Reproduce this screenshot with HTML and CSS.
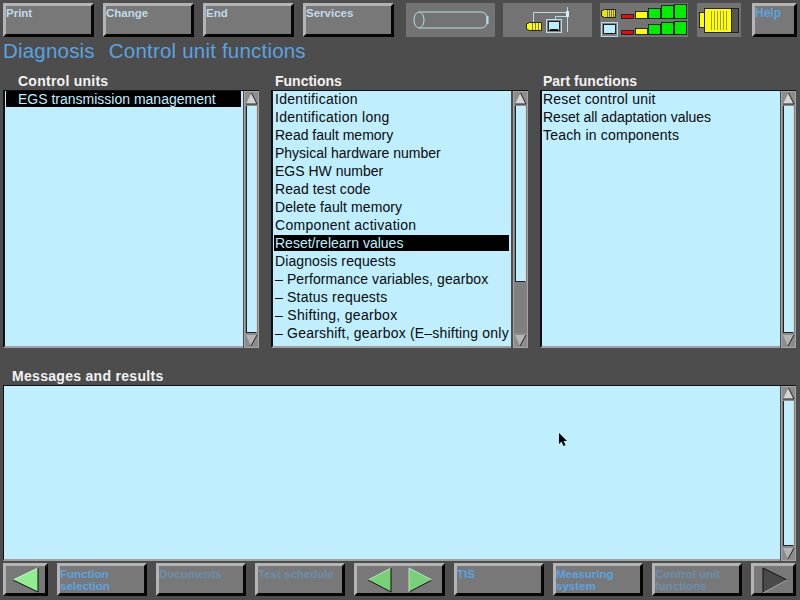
FILE: index.html
```html
<!DOCTYPE html>
<html lang="en">

<head>
    <meta charset="UTF-8">
    <title>Diagnosis - Control unit functions</title>
    <link rel="stylesheet" href="styles.css">
</head>

<body>
    <div class="screen">
        <div class="top-bar">
            <div class="btn top-btn">Print</div>
            <div class="btn top-btn">Change</div>
            <div class="btn top-btn">End</div>
            <div class="btn top-btn">Services</div>

            <div class="panel panel-cable">
                <svg width="89" height="34" viewBox="0 0 89 34">
                    <path d="M13 9H76Q80 10 81 13V21Q80 24 76 25H13" fill="none" stroke="#b5dcea"/>
                    <ellipse cx="13" cy="17" rx="5" ry="8" fill="#737373" stroke="#b5dcea"/>
                    <path d="M81.500 13V21" stroke="#b5dcea" stroke-width="2"/>
                </svg>
            </div>
            <div class="panel panel-net">
                <svg width="89" height="34" viewBox="0 0 89 34">
                    <path d="M30.500 20V9.500H65M52.500 16V13.500H65M64.500 4V29" fill="none" stroke="#b5dcea"/>
                    <rect x="63" y="8" width="3" height="6" fill="#d6eef6"/>
                    <path d="M26.500 19.500H38.500V27.500H26.500L23.500 26V21Z" fill="#ffff00" stroke="#222"/>
                    <path d="M29.500 20V27M32.500 20V27M35.500 20V27" stroke="#777"/>
                    <rect x="43.500" y="16.500" width="15" height="13" fill="#7f7f7f" stroke="#b5dcea"/>
                    <rect x="45.500" y="18.500" width="11" height="9" fill="#bdeeff" stroke="#222"/>
                    <rect x="47" y="26" width="8" height="2" fill="#111"/>
                </svg>
            </div>
            <div class="panel panel-bars">
                <svg width="88" height="34" viewBox="0 0 88 34">
                    <path d="M4.500 6.500H15.500V14.500H4.500L1.500 13V8Z" fill="#e6e600" stroke="#222"/>
                    <path d="M7.500 7V14M9.500 7V14M11.500 7V14M13.500 7V14" stroke="#777"/>
                    <rect x="1.500" y="19.500" width="16" height="14" fill="#7f7f7f" stroke="#b5dcea"/>
                    <rect x="3.500" y="21.500" width="12" height="9" fill="#bdeeff" stroke="#222"/>
                    <rect x="6" y="30" width="7" height="1" fill="#111"/>
                    <g stroke="#222">
                        <rect x="21.500" y="11.500" width="12" height="4" fill="#e01010"/>
                        <rect x="35.500" y="8.500" width="12" height="7" fill="#ffff00"/>
                        <rect x="48.500" y="5.500" width="12" height="10" fill="#00ee00"/>
                        <rect x="61.500" y="2.500" width="12" height="13" fill="#00ee00"/>
                        <rect x="74.500" y="1.500" width="12" height="14" fill="#00ee00"/>
                        <rect x="21.500" y="27.500" width="12" height="4" fill="#e01010"/>
                        <rect x="35.500" y="25.500" width="12" height="6" fill="#ffff00"/>
                        <rect x="48.500" y="21.500" width="12" height="10" fill="#00ee00"/>
                        <rect x="61.500" y="19.500" width="12" height="12" fill="#00ee00"/>
                        <rect x="74.500" y="18.500" width="12" height="13" fill="#00ee00"/>
                    </g>
                </svg>
            </div>
            <div class="panel panel-plug">
                <svg width="44" height="34" viewBox="0 0 44 34">
                    <rect x="2.500" y="9.500" width="5" height="15" fill="#ffff00" stroke="#222"/>
                    <rect x="7.500" y="5.500" width="27" height="24" fill="#ffff00" stroke="#222"/>
                    <rect x="34.500" y="5.500" width="7" height="24" fill="#555" stroke="#222"/>
                    <path d="M14.500 8V27M17.500 8V27M20.500 8V27M23.500 8V27M26.500 8V27M29.500 8V27" stroke="#99992a"/>
                </svg>
            </div>
            <div class="btn help-btn">Help</div>
        </div>

        <h1 class="page-title"><span>Diagnosis</span><span>Control unit functions</span></h1>

        <div class="columns">
            <section class="col">
                <h2 class="col-head wide">Control units</h2>
                <div class="list-wrap">
                    <ul class="list">
                        <li class="sel sel-units">EGS transmission management</li>
                    </ul>
                    <div class="scrollbar">
                        <div class="arrow-btn"><svg width="13" height="14" viewBox="0 0 13 14"><path d="M6.500 1L12 12H1Z" fill="#d4d4d4"/><path d="M6.500 1L12 12H1" fill="none" stroke="#222"/></svg></div>
                        <div class="track"></div>
                        <div class="arrow-btn"><svg width="13" height="14" viewBox="0 0 13 14"><path d="M1 2H12L6 13Z" fill="#b4b4b4"/><path d="M12 2L6 13" fill="none" stroke="#222"/></svg></div>
                    </div>
                </div>
            </section>
            <section class="col">
                <h2 class="col-head">Functions</h2>
                <div class="list-wrap">
                    <ul class="list">
                        <li class="sp3">Identification</li>
                        <li class="sp3">Identification long</li>
                        <li>Read fault memory</li>
                        <li>Physical hardware number</li>
                        <li>EGS HW number</li>
                        <li class="sp1">Read test code</li>
                        <li class="sp1">Delete fault memory</li>
                        <li class="sp3">Component activation</li>
                        <li class="sel">Reset/relearn values</li>
                        <li class="sp1">Diagnosis requests</li>
                        <li class="sp1">&#8211; Performance variables, gearbox</li>
                        <li class="sp2">&#8211; Status requests</li>
                        <li class="sp3">&#8211; Shifting, gearbox</li>
                        <li class="sp2">&#8211; Gearshift, gearbox (E&#8211;shifting only</li>
                    </ul>
                    <div class="scrollbar">
                        <div class="arrow-btn"><svg width="13" height="14" viewBox="0 0 13 14"><path d="M6.500 1L12 12H1Z" fill="#d4d4d4"/><path d="M6.500 1L12 12H1" fill="none" stroke="#222"/></svg></div>
                        <div class="track track-short"></div>
                        <div class="track-rest"></div>
                        <div class="arrow-btn"><svg width="13" height="14" viewBox="0 0 13 14"><path d="M1 2H12L6 13Z" fill="#b4b4b4"/><path d="M12 2L6 13" fill="none" stroke="#222"/></svg></div>
                    </div>
                </div>
            </section>
            <section class="col">
                <h2 class="col-head">Part functions</h2>
                <div class="list-wrap">
                    <ul class="list">
                        <li class="sp2">Reset control unit</li>
                        <li>Reset all adaptation values</li>
                        <li class="sp2">Teach in components</li>
                    </ul>
                    <div class="scrollbar">
                        <div class="arrow-btn"><svg width="13" height="14" viewBox="0 0 13 14"><path d="M6.500 1L12 12H1Z" fill="#d4d4d4"/><path d="M6.500 1L12 12H1" fill="none" stroke="#222"/></svg></div>
                        <div class="track"></div>
                        <div class="arrow-btn"><svg width="13" height="14" viewBox="0 0 13 14"><path d="M1 2H12L6 13Z" fill="#b4b4b4"/><path d="M12 2L6 13" fill="none" stroke="#222"/></svg></div>
                    </div>
                </div>
            </section>
        </div>

        <h2 class="msg-head">Messages and results</h2>
        <div class="list-wrap msg-wrap">
            <div class="list msg-box"></div>
            <div class="scrollbar">
                <div class="arrow-btn"><svg width="13" height="14" viewBox="0 0 13 14"><path d="M6.500 1L12 12H1Z" fill="#d4d4d4"/><path d="M6.500 1L12 12H1" fill="none" stroke="#222"/></svg></div>
                <div class="track"></div>
                <div class="arrow-btn"><svg width="13" height="14" viewBox="0 0 13 14"><path d="M1 2H12L6 13Z" fill="#b4b4b4"/><path d="M12 2L6 13" fill="none" stroke="#222"/></svg></div>
            </div>
        </div>

        <div class="bottom-bar">
            <div class="btn arrow-nav">
                <svg width="39" height="27" viewBox="0 0 39 27">
                    <path d="M7 14L32 2V26Z" fill="#90ee90"/>
                    <path d="M7 14L32 2" fill="none" stroke="#d8f0d8"/>
                    <path d="M7 14L32 26V2" fill="none" stroke="#111"/>
                </svg>
            </div>
            <div class="btn nav-btn">Function<br>selection</div>
            <div class="btn nav-btn off">Documents</div>
            <div class="btn nav-btn off">Test schedule</div>
            <div class="btn nav-pair">
                <svg width="85" height="27" viewBox="0 0 85 27">
                    <path d="M11 14L34 2V26Z" fill="#78d078"/>
                    <path d="M11 14L34 2" fill="none" stroke="#c0e0c0"/>
                    <path d="M11 14L34 26V2" fill="none" stroke="#111"/>
                    <path d="M75 14L52 2V26Z" fill="#78d078"/>
                    <path d="M75 14L52 26" fill="none" stroke="#111"/>
                    <path d="M75 14L52 2V26" fill="none" stroke="#c0e0c0"/>
                </svg>
            </div>
            <div class="btn nav-btn">TIS</div>
            <div class="btn nav-btn">Measuring<br>system</div>
            <div class="btn nav-btn off">Control unit<br>functions</div>
            <div class="btn arrow-nav">
                <svg width="39" height="27" viewBox="0 0 39 27">
                    <path d="M33 14L9 2V27Z" fill="#4a4a4a"/>
                    <path d="M33 14L9 2V27" fill="none" stroke="#111"/>
                    <path d="M33 14L9 27" fill="none" stroke="#a8a8a8"/>
                </svg>
            </div>
        </div>

        <svg class="cursor" width="10" height="14" viewBox="0 0 10 14"><path d="M0 0V11L2.500 8.500 4.500 13 6.500 12 4.500 8H8Z" fill="#000"/></svg>
    </div>
</body>

</html>
```

FILE: styles.css
```css
html, body {
    margin: 0;
    padding: 0;
}

.screen {
    position: relative;
    width: 800px;
    height: 600px;
    overflow: hidden;
    background-color: #4d4d4d;
    font-family: "Liberation Sans", Arial, sans-serif;
    font-size: 14px;
}

.btn {
    box-sizing: border-box;
    background-color: #787878;
    border: 3px solid;
    border-color: #b4b4b4 #050505 #050505 #b4b4b4;
    font-weight: bold;
    font-size: 11.5px;
    line-height: 12px;
    color: #c4e4f4;
}

/* top row */
.top-bar {
    display: flex;
    padding: 3px 3px 0;
    height: 34px;
}

.top-btn {
    width: 91px;
    height: 34px;
    margin-right: 9px;
    padding: 1px 0 0;
    color: #bcdcec;
}

.top-btn:nth-child(4) {
    margin-right: 12px;
}

.panel {
    height: 34px;
    background-color: #737373;
}

.panel-cable {
    width: 89px;
    margin-right: 8px;
}

.panel-net {
    width: 89px;
    margin-right: 8px;
}

.panel-bars {
    width: 88px;
    margin-right: 9px;
}

.panel-plug {
    width: 44px;
    margin-right: 11px;
}

.help-btn {
    width: 45px;
    height: 34px;
    padding-top: 1px;
    font-size: 12px;
    color: #5ba3e0;
}

.page-title {
    display: flex;
    gap: 14px;
    margin: 2px 0 0 3px;
    font-size: 20.5px;
    line-height: 24px;
    letter-spacing: 0.2px;
    font-weight: normal;
    color: #5ba3e0;
}

/* lists */
.columns {
    display: flex;
    margin: 10px 0 0 3px;
    gap: 12px;
}

.col {
    width: 256px;
}

.col:nth-child(2) {
    width: 257px;
}

.col-head {
    margin: 0 0 0 15px;
    height: 17px;
    font-size: 14px;
    line-height: 17px;
    color: #f2f2f2;
}

.col:nth-child(2) .col-head {
    margin-left: 4px;
}

.col:nth-child(3) .col-head {
    margin-left: 3px;
}

.wide {
    letter-spacing: 0.25px;
}

.list-wrap {
    display: flex;
    height: 257px;
    border-top: 1px solid #111;
}

.list {
    box-sizing: border-box;
    flex: 1;
    margin: 0;
    padding: 0;
    list-style: none;
    background-color: #bfeeff;
    border-left: 2px solid #111;
    border-bottom: 2px solid #a0a0a0;
    color: #0a0a0a;
}

.list li {
    height: 18px;
    line-height: 17px;
    padding-left: 1px;
    margin-right: 2px;
    white-space: nowrap;
}

.col:nth-child(2) .list li {
    margin-left: 1px;
}

.list .sp1 {
    letter-spacing: 0.1px;
}

.list .sp2 {
    letter-spacing: 0.2px;
}

.list .sp3 {
    letter-spacing: 0.3px;
}

.list .sel {
    height: 16px;
    margin-bottom: 2px;
    background-color: #000;
    color: #bfeeff;
}

.list .sel-units {
    padding-left: 12px;
    margin-left: 1px;
}

.scrollbar {
    display: flex;
    flex-direction: column;
    box-sizing: border-box;
    flex: none;
    width: 15px;
    margin-left: 1px;
    background-color: #808080;
    border: 1px solid #a4a4a4;
}

.col:nth-child(2) .scrollbar {
    margin-left: 2px;
}

.arrow-btn {
    height: 14px;
    background-color: #8c8c8c;
}

.arrow-btn svg {
    display: block;
}

.track {
    flex: 1;
    margin: 0 1px;
    background-color: #bfeeff;
    border-left: 1px solid #222;
    border-right: 1px solid #d8d8d8;
    border-bottom: 1px solid #222;
}

.track-short {
    flex: none;
    height: 175px;
}

.track-rest {
    flex: 1;
}

/* messages */
.msg-head {
    margin: 20px 0 0 12px;
    height: 17px;
    font-size: 14px;
    line-height: 17px;
    letter-spacing: 0.3px;
    color: #f2f2f2;
}

.msg-wrap {
    height: 175px;
    margin-left: 3px;
    width: 793px;
}

.msg-box {
    border-left: 1px solid #111;
}

/* bottom row */
.bottom-bar {
    display: flex;
    gap: 9px;
    margin: 2px 0 0 3px;
}

.nav-btn {
    width: 90px;
    height: 33px;
    padding: 2px 0 0;
    color: #5ba3e0;
}

.nav-btn.off {
    color: #6a8fae;
}

.arrow-nav {
    width: 45px;
    height: 33px;
}

.nav-pair {
    width: 91px;
    height: 33px;
}

.cursor {
    position: absolute;
    left: 559px;
    top: 433px;
}
```
